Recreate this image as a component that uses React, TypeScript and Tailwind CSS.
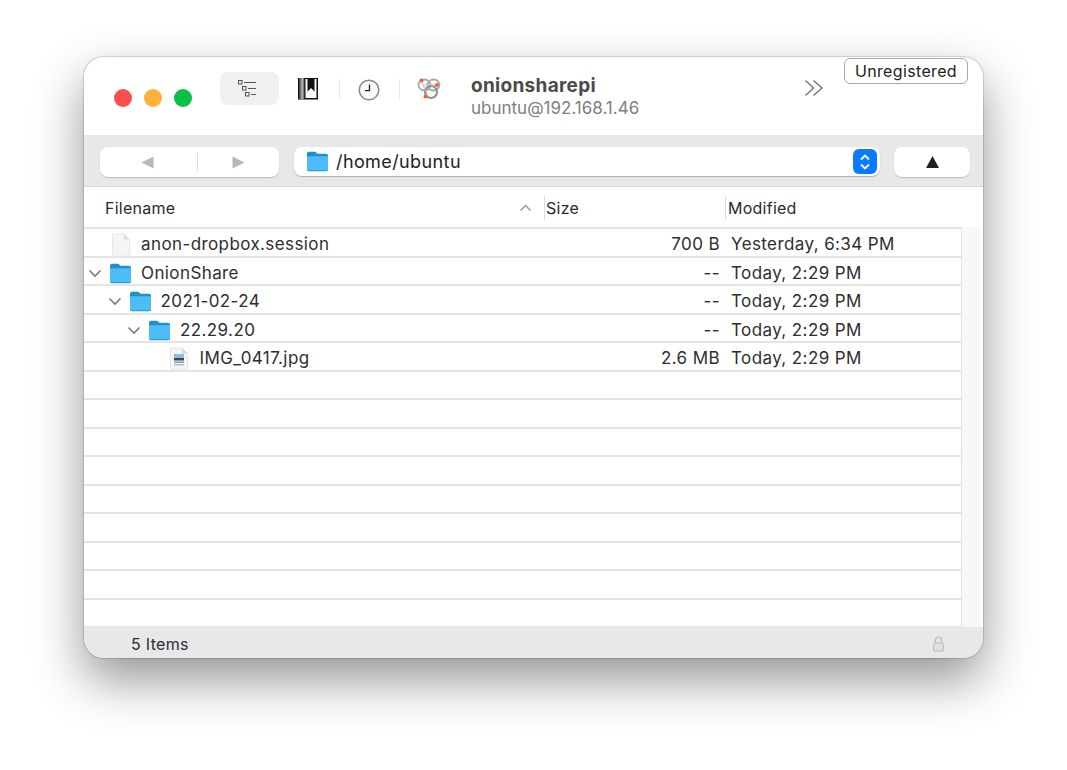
import React from 'react';

const font = { fontFamily: 'Inter, "Liberation Sans", sans-serif' };

const files = [
  { name: 'anon-dropbox.session', size: '700 B', date: 'Yesterday, 6:34 PM', depth: 0, kind: 'doc' },
  { name: 'OnionShare', size: '--', date: 'Today, 2:29 PM', depth: 0, kind: 'folder' },
  { name: '2021-02-24', size: '--', date: 'Today, 2:29 PM', depth: 1, kind: 'folder' },
  { name: '22.29.20', size: '--', date: 'Today, 2:29 PM', depth: 2, kind: 'folder' },
  { name: 'IMG_0417.jpg', size: '2.6 MB', date: 'Today, 2:29 PM', depth: 3, kind: 'image' },
];

const indents = ['w-0', 'w-[19.5px]', 'w-[39px]', 'w-[58.5px]'];

function FolderIcon() {
  return (
    <svg width="23" height="21" viewBox="0 0 23 21" className="shrink-0">
      <path d="M1 3C1 1.500 1.800 .8 3.200 .8h5c1 0 1.500.3 2.200 1l.9 1h8.500c1.500 0 2.200.8 2.200 2.200V18c0 1.400-.8 2.200-2.200 2.200H3.200C1.800 20.200 1 19.400 1 18Z" fill="#1f8fd0" />
      <path d="M1 5.200h21V18c0 1.300-.8 2-2.200 2H3.200C1.800 20 1 19.300 1 18Z" fill="#4cbef5" />
      <path d="M1.500 19.500h20" stroke="#2d9fdc" strokeWidth="1" />
    </svg>
  );
}

function DocIcon() {
  return (
    <svg width="20" height="24" viewBox="0 0 20 24" className="shrink-0">
      <path d="M1.500 1h11.500l5.500 5.500V23h-17Z" fill="#f5f5f5" stroke="#e8e8e8" strokeWidth="1" />
      <path d="M13 1v5.500h5.500Z" fill="#dcdcdc" />
    </svg>
  );
}

function ImageIcon() {
  return (
    <svg width="20" height="23" viewBox="0 0 20 23" className="shrink-0">
      <path d="M1.500 1h11.500l5.500 5.500V22h-17Z" fill="#f5f5f5" stroke="#e6e6e6" strokeWidth="1" />
      <path d="M13 1v5.500h5.500Z" fill="#d8d8d8" />
      <rect x="5" y="7" width="10" height="4" fill="#86bce6" />
      <rect x="5" y="11" width="10" height="2.500" fill="#3a4650" />
      <rect x="5" y="14.500" width="10" height="1.500" fill="#8d949c" />
      <rect x="5" y="17" width="10" height="1.500" fill="#b8bcc2" />
    </svg>
  );
}

function Disclosure() {
  return (
    <svg width="14" height="9" viewBox="0 0 14 9" className="shrink-0">
      <path d="M1.500 1.500 7 7l5.500-5.500" fill="none" stroke="#7a7a7a" strokeWidth="1.600" />
    </svg>
  );
}

function TrafficLights() {
  return (
    <div className="flex gap-3 mt-[3px]">
      <span className="w-[18px] h-[18px] rounded-full bg-[#fc5050]" />
      <span className="w-[18px] h-[18px] rounded-full bg-[#fdb03a]" />
      <span className="w-[18px] h-[18px] rounded-full bg-[#0ac048]" />
    </div>
  );
}

function ListIcon() {
  return (
    <svg width="20" height="18" viewBox="0 0 20 18">
      <g fill="#eee" stroke="#555" strokeWidth="1">
        <rect x="0.500" y="0.500" width="3.500" height="3.500" />
        <rect x="4.500" y="6.500" width="3.500" height="3.500" />
        <rect x="7.500" y="12.500" width="3.500" height="3.500" />
      </g>
      <path d="M6 2.500h12M10 8.500h8M13 14.500h5" stroke="#555" strokeWidth="1" />
    </svg>
  );
}

function BookmarkIcon() {
  return (
    <svg width="20" height="22" viewBox="0 0 20 22">
      <defs>
        <linearGradient id="spine" x1="0" x2="1" y1="0" y2="0">
          <stop offset="0" stopColor="#333" />
          <stop offset="0.6" stopColor="#bbb" />
          <stop offset="1" stopColor="#444" />
        </linearGradient>
      </defs>
      <rect x="0" y="0" width="20" height="21.500" fill="#111" />
      <rect x="1" y="0" width="5.500" height="21.500" fill="url(#spine)" />
      <rect x="7.500" y="1" width="11" height="19" fill="#fafafa" />
      <path d="M9.500 0h7v13.500l-3.500-3.500-3.500 3.500Z" fill="#111" />
    </svg>
  );
}

function ClockIcon() {
  return (
    <svg width="22" height="22" viewBox="0 0 22 22">
      <circle cx="11" cy="11" r="9.800" fill="#fafafa" stroke="#8a8a8a" strokeWidth="1.500" />
      <path d="M11.500 5.500v6.200H7" fill="none" stroke="#222" strokeWidth="1.300" />
    </svg>
  );
}

function ShareLogo() {
  return (
    <svg width="24" height="24" viewBox="0 0 24 24">
      <g fill="none" stroke="#a8a8a8" strokeWidth="1.800">
        <ellipse cx="7.500" cy="8" rx="6" ry="5.500" />
        <ellipse cx="16.500" cy="8" rx="6" ry="5.500" />
      </g>
      <circle cx="14" cy="15" r="6" fill="none" stroke="#8f8f8f" strokeWidth="2" />
      <path d="M4 3 11 19M19 8H6" stroke="#bbb" strokeWidth="1" />
      <circle cx="4.500" cy="3.500" r="2" fill="#f0623a" />
      <circle cx="20" cy="8" r="2" fill="#f0623a" />
      <circle cx="8.500" cy="19.500" r="2" fill="#f0623a" />
    </svg>
  );
}

function Sep() {
  return <span className="w-px h-5 bg-[#e8e8e8]" />;
}

function TitleBar() {
  return (
    <div className="relative h-[78px] bg-white flex items-start pl-[30px] pt-[29px] rounded-t-[20px] shrink-0">
      <TrafficLights />
      <div className="ml-[28px] -mt-[14px] w-[59px] h-[33px] bg-[#f0f0f0] rounded-lg flex items-center justify-center pr-[3px]">
        <ListIcon />
      </div>
      <div className="-mt-[14px] h-[33px] flex items-center">
        <span className="ml-[19px]">
          <BookmarkIcon />
        </span>
        <span className="ml-[21px] flex items-center">
          <Sep />
        </span>
        <span className="ml-[18px] mt-[2px]">
          <ClockIcon />
        </span>
        <span className="ml-[19px] flex items-center">
          <Sep />
        </span>
        <span className="ml-[17px]">
          <ShareLogo />
        </span>
      </div>
      <div className="ml-[30px] -mt-[12px] leading-none">
        <div className="text-[19px] font-bold text-[#4a4a4a] leading-[24px] tracking-[0.3px]">onionsharepi</div>
        <div className="text-[17px] text-[#808080] leading-[20px]">ubuntu@192.168.1.46</div>
      </div>
      <svg width="20" height="18" viewBox="0 0 20 18" className="absolute left-[720px] top-[22px]">
        <path d="M1.500 1.500 9.500 9l-8 7.500M9.500 1.500 18 9l-8.500 7.500" fill="none" stroke="#6e6e6e" strokeWidth="1.300" />
      </svg>
      <div className="absolute left-[760px] top-[1px] w-[124px] h-[26px] rounded-md border border-[#a8a8a8] bg-white flex items-center justify-center text-[16px] tracking-[0.35px] text-[#222]">
        Unregistered
      </div>
    </div>
  );
}

function NavBar() {
  return (
    <div className="h-[52px] bg-[#e7e8ea] border-b border-[#d4d4d6] flex items-start pl-4 pt-[12px] shrink-0">
      <div className="w-[179px] h-[30px] bg-white rounded-lg shadow-[0_1px_1px_rgba(0,0,0,0.2)] flex items-center">
        <div className="w-[97px] flex justify-center pr-[3px] text-[#b8b8b8]">
          <svg width="13" height="13" viewBox="0 0 13 13">
            <path d="M12.500 .5v12L.5 6.500Z" fill="currentColor" />
          </svg>
        </div>
        <span className="w-px h-[18px] bg-[#dcdcdc]" />
        <div className="flex-1 flex justify-center text-[#b8b8b8]">
          <svg width="13" height="13" viewBox="0 0 13 13">
            <path d="M.5 .5v12L12.500 6.500Z" fill="currentColor" />
          </svg>
        </div>
      </div>
      <div className="ml-[15px] w-[586px] h-[29px] bg-white rounded-lg shadow-[0_1px_1px_rgba(0,0,0,0.25)] flex items-center pl-[12px] pr-[3px]">
        <FolderIcon />
        <span className="ml-[7px] text-[18px] tracking-[0.4px] text-[#222] flex-1">/home/ubuntu</span>
        <div className="w-6 h-[25px] rounded-md bg-[#0a7bff] flex items-center justify-center">
          <svg width="12" height="18" viewBox="0 0 12 18">
            <path d="M2 6.500 6 2.500l4 4M2 11.500l4 4 4-4" fill="none" stroke="white" strokeWidth="1.800" />
          </svg>
        </div>
      </div>
      <div className="ml-[14px] w-[76px] h-[30px] bg-white rounded-lg shadow-[0_1px_1px_rgba(0,0,0,0.2)] flex items-center justify-center">
        <svg width="13" height="12" viewBox="0 0 13 12">
          <path d="M6.500 0 13 12H0Z" fill="#222" />
        </svg>
      </div>
    </div>
  );
}

function ColumnHeader() {
  return (
    <div className="h-[40px] bg-white flex items-center text-[16px] tracking-[0.25px] text-[#2a2a2a] shrink-0 pr-[22px] pt-[2px]">
      <div className="w-[460px] pl-[21px] flex items-center justify-between pr-[12px]">
        <span>Filename</span>
        <svg width="13" height="8" viewBox="0 0 13 8">
          <path d="M1.500 6.500 6.500 1.500l5 5" fill="none" stroke="#9a9a9a" strokeWidth="1.500" />
        </svg>
      </div>
      <div className="w-[181px] h-[24px] border-l border-[#dcdcdc] pl-[1px] flex items-center">Size</div>
      <div className="flex-1 h-[24px] border-l border-[#dcdcdc] pl-[2px] flex items-center">Modified</div>
    </div>
  );
}

function FileRow({ file }: { file: (typeof files)[number] }) {
  return (
    <div className="h-[28.5px] flex items-center border-b-2 border-[#e4e4e4] pt-[5px] text-[17px] tracking-[0.4px] text-[#2e2e2e]">
      <div className="w-[536px] flex items-center pl-[4px]">
        <span className={indents[file.depth]} />
        <span className="w-[14px] flex items-center">{file.kind === 'folder' && <Disclosure />}</span>
        {file.kind === 'folder' && (
          <span className="ml-[7px] mr-[9px]">
            <FolderIcon />
          </span>
        )}
        {file.kind === 'doc' && (
          <span className="ml-[9px] mr-[10px]">
            <DocIcon />
          </span>
        )}
        {file.kind === 'image' && (
          <span className="ml-[8px] mr-[11px]">
            <ImageIcon />
          </span>
        )}
        <span className="whitespace-nowrap">{file.name}</span>
      </div>
      <div className="w-[100px] text-right">{file.size}</div>
      <div className="pl-[11px] whitespace-nowrap">{file.date}</div>
    </div>
  );
}

function FileList() {
  const empties = Array.from({ length: 9 }, (_, i) => i);
  return (
    <div className="flex flex-1 min-h-0">
      <div className="w-[878px] border-r border-[#e4e4e4] border-t-2 border-t-[#e4e4e4]">
        {files.map((f) => (
          <FileRow key={f.name} file={f} />
        ))}
        {empties.map((i) => (
          <div key={i} className="h-[28.5px] border-b-2 border-[#e4e4e4]" />
        ))}
      </div>
      <div className="flex-1 bg-[#f8f8f8] mr-[2px]" />
    </div>
  );
}

function StatusBar() {
  return (
    <div className="h-[31px] bg-[#e7e8ea] flex items-center justify-between pl-[47px] pr-[39px] pt-[2px] text-[16px] tracking-[0.3px] text-[#2e2e2e] rounded-b-[20px] shrink-0">
      <span>5 Items</span>
      <svg width="11" height="16" viewBox="0 0 11 16">
        <path d="M2.500 7V4a3 3 0 0 1 6 0v3" fill="none" stroke="#b8b8b8" strokeWidth="1.200" />
        <rect x="0.600" y="7" width="9.800" height="8" rx="1" fill="#e0e0e2" stroke="#b8b8b8" strokeWidth="1" />
      </svg>
    </div>
  );
}

export default function App(): JSX.Element {
  return (
    <div className="w-[1067px] h-[770px] bg-white pl-[84px] pt-[57px] overflow-hidden" style={font}>
      <div className="w-[899px] h-[601px] flex flex-col rounded-[20px] bg-white shadow-[0_22px_50px_rgba(0,0,0,0.42),0_0_1.5px_rgba(0,0,0,0.7)]">
        <TitleBar />
        <NavBar />
        <ColumnHeader />
        <FileList />
        <StatusBar />
      </div>
    </div>
  );
}
